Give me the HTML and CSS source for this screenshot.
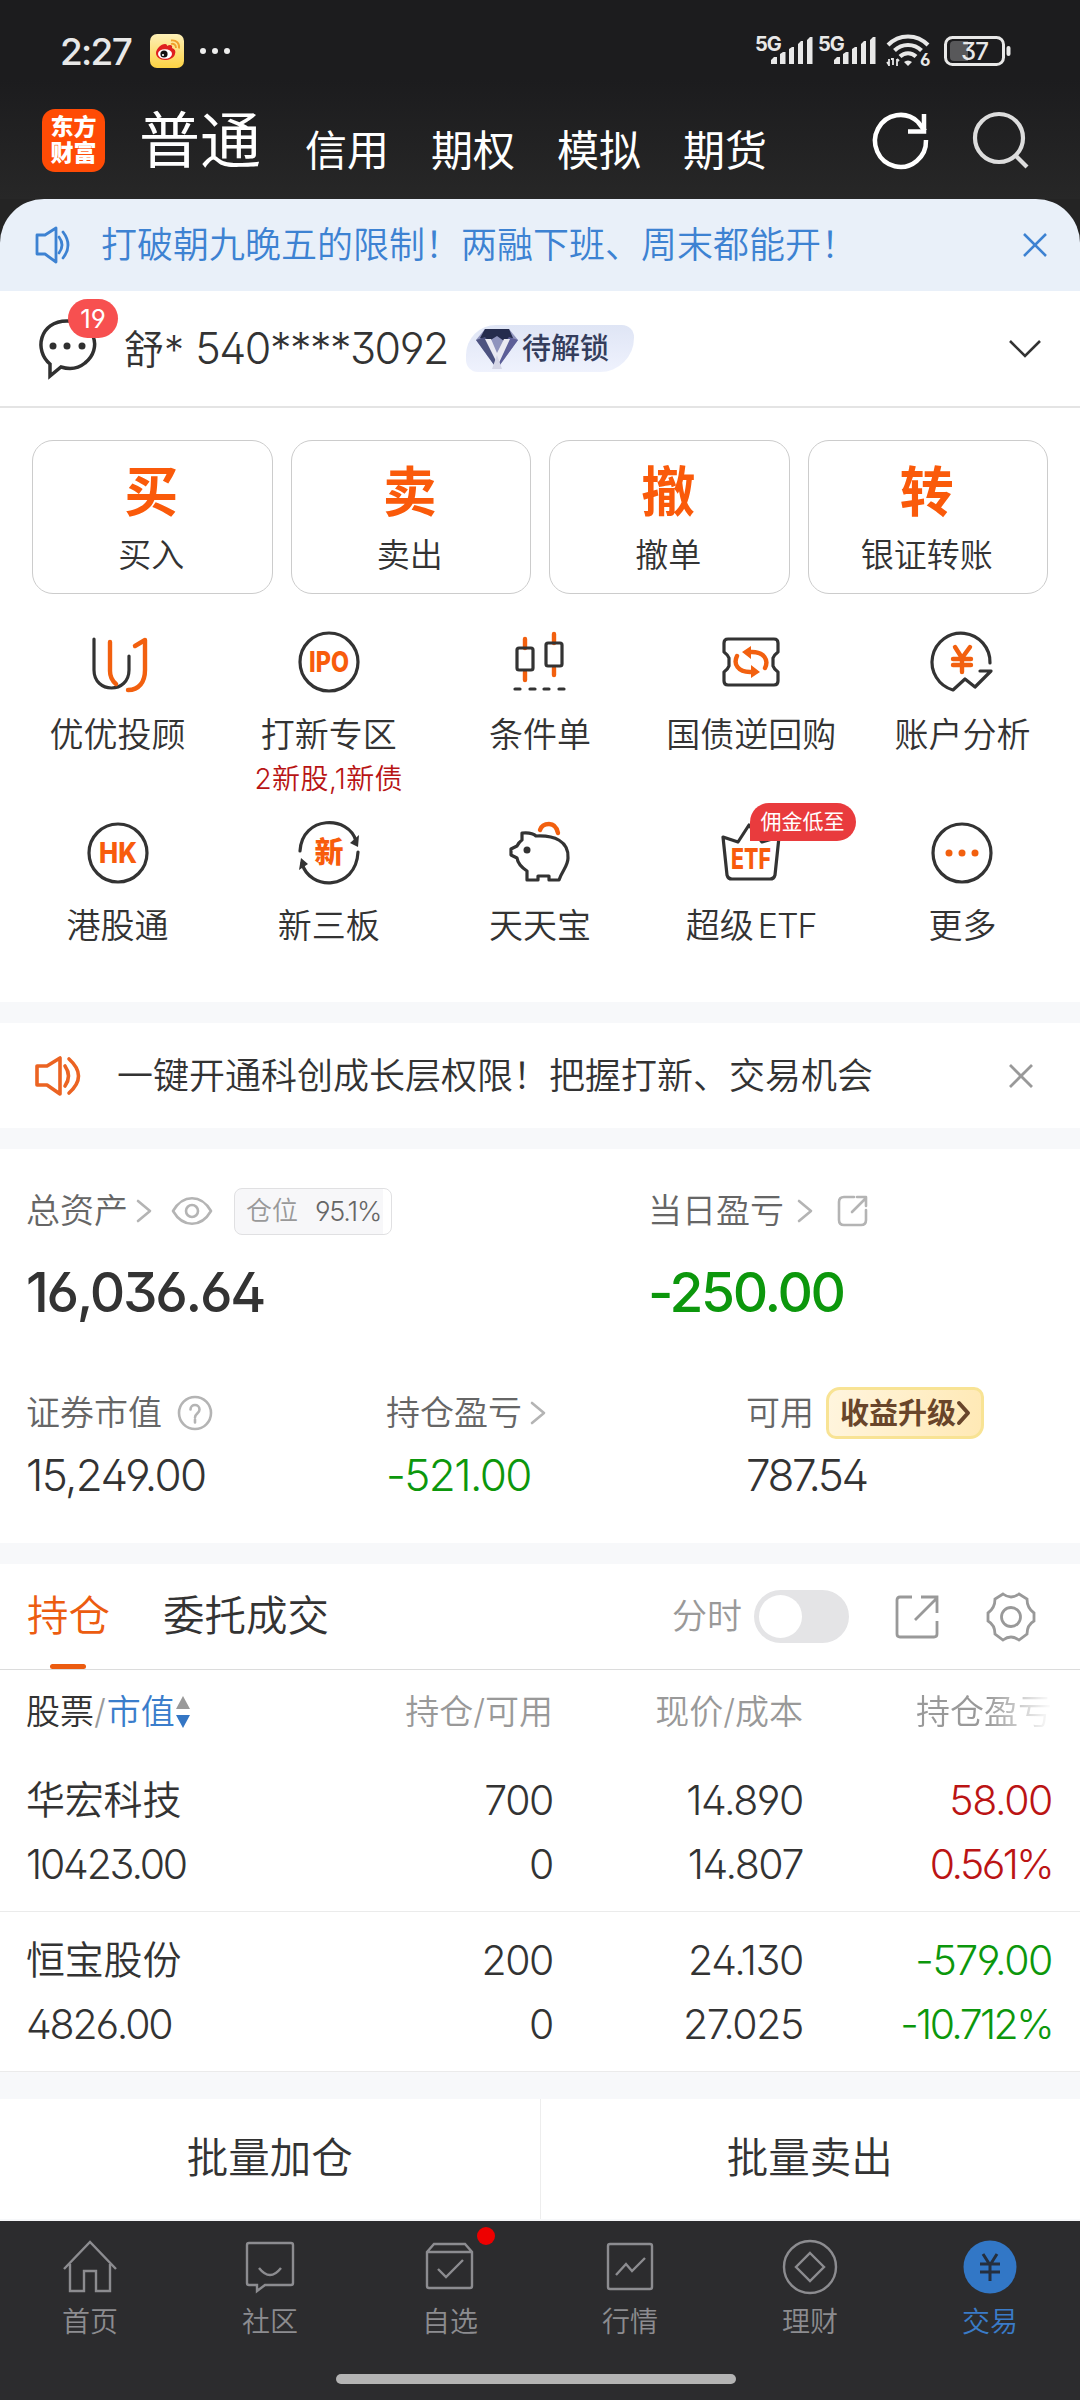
FILE: index.html
```html
<!DOCTYPE html>
<html lang="zh-CN">
<head>
    <meta charset="UTF-8">
    <meta name="viewport" content="width=device-width, initial-scale=1.0">
    <title>交易</title>
    <link rel="stylesheet" href="styles.css">
</head>
<body>
    <header class="header">
        <div class="status">
            <span class="time">2:27</span>
            <svg class="weibo" width="34" height="34" viewBox="0 0 34 34">
                <defs>
                    <linearGradient id="weiboBg" x1="0" y1="0" x2="0" y2="1">
                        <stop offset="0" stop-color="#fdf0b8"/>
                        <stop offset="1" stop-color="#fdd243"/>
                    </linearGradient>
                </defs>
                <rect width="34" height="34" rx="7" fill="url(#weiboBg)"/>
                <path d="M6 19c0-4 5-9 9-9 2 0 2 1 2 2 3-2 6-1 5 2 3 1 4 3 3 6-1 4-6 6-10 6-5 0-9-3-9-7z" fill="#df2020"/>
                <ellipse cx="15" cy="20" rx="7" ry="4.800" fill="#fff"/>
                <circle cx="14" cy="20" r="3.600" fill="#111"/>
                <circle cx="13" cy="21" r="1.100" fill="#fff"/>
                <path d="M21 10c3-1 5 1 5 4M21 6.500c5-1 9 3 8 8" fill="none" stroke="#f0a02c" stroke-width="1.800"/>
            </svg>
            <svg width="32" height="8" viewBox="0 0 32 8" fill="#eee">
                <circle cx="4" cy="4" r="3"/><circle cx="16" cy="4" r="3"/><circle cx="28" cy="4" r="3"/>
            </svg>
            <div class="status-right">
                <svg width="60" height="34" viewBox="0 0 60 34" fill="#e8e8e8">
                    <text class="net" x="0" y="17">5G</text>
                    <path d="M16 30v-4l3-3h3v7zM25 30V20l3-2h2.500v12zM34 30V15l3-2h2v17zM43 30V10l3-3h2v23zM52 30V6l3-3h2.500v27z"/>
                </svg>
                <svg width="60" height="34" viewBox="0 0 60 34" fill="#e8e8e8">
                    <text class="net" x="0" y="17">5G</text>
                    <path d="M16 30v-4l3-3h3v7zM25 30V20l3-2h2.500v12zM34 30V15l3-2h2v17zM43 30V10l3-3h2v23zM52 30V6l3-3h2.500v27z"/>
                </svg>
                <svg class="wifi" width="44" height="36" viewBox="0 0 44 36" fill="none" stroke="#e8e8e8" stroke-width="4">
                    <path d="M2 12C13 .500 31 .500 42 12"/>
                    <path d="M8.500 17.500C16 10 28 10 35.500 17.500"/>
                    <path d="M14 23.500c4.500-4.500 11.500-4.500 16 0"/>
                    <path d="M18 29l4 4 4-4c-2.500-2-5.500-2-8 0z" fill="#e8e8e8" stroke="none"/>
                    <path d="M3 26v7M7 25v7M11 26v7M1 29l2 3M7 26l-2 0M13 28l-2-2" stroke-width="1.800"/>
                    <text class="wifi-num" x="34" y="33">6</text>
                </svg>
                <svg class="battery" width="68" height="30" viewBox="0 0 68 30">
                    <rect x="1.500" y="1.500" width="58" height="27" rx="7" fill="none" stroke="#e8e8e8" stroke-width="3"/>
                    <path d="M10 5h14v20H10q-4 0-4-4V9q0-4 4-4z" fill="#58585a"/>
                    <rect x="62.500" y="10" width="4" height="10" rx="2" fill="#e8e8e8"/>
                    <text class="battery-num" x="30.500" y="23.500" text-anchor="middle">37</text>
                </svg>
            </div>
        </div>
        <nav class="top-nav">
            <div class="logo"><span>东方</span><span>财富</span></div>
            <ul class="account-tabs">
                <li class="current">普通</li>
                <li>信用</li>
                <li>期权</li>
                <li>模拟</li>
                <li>期货</li>
            </ul>
            <svg class="refresh" width="58" height="58" viewBox="0 0 58 58" fill="none" stroke="#fff" stroke-width="4.500">
                <path d="M54 29A25.500 26 0 1 1 46 11L53 20"/>
                <path d="M52 3v17.500H36"/>
            </svg>
            <svg width="58" height="58" viewBox="0 0 58 58" fill="none" stroke="#ddd" stroke-width="4.200">
                <circle cx="27" cy="27" r="24"/>
                <path d="M43 44l12 12"/>
            </svg>
        </nav>
    </header>

    <div class="banner">
        <svg width="38" height="40" viewBox="0 0 38 40" fill="none" stroke="#3d82d2" stroke-width="2.800" stroke-linejoin="round">
            <path d="M2 10h8l11-7v34l-11-8H2z"/>
            <path d="M24 12q6 8 0 16M28 7q10 13 0 26" stroke-linecap="round"/>
        </svg>
        <p>打破朝九晚五的限制！两融下班、周末都能开！</p>
        <svg width="26" height="26" viewBox="0 0 26 26" fill="none" stroke="#3d82d2" stroke-width="2.500">
            <path d="M2 2l22 22M24 2L2 24"/>
        </svg>
    </div>

    <div class="account">
        <div class="message">
            <svg width="60" height="60" viewBox="0 0 60 60" fill="none" stroke="#303030" stroke-width="3.500">
                <path d="M12 45C-4 32 1 2 29 2s36 28 18 42c-6 5-14 7-24 4L12 57z"/>
                <g fill="#303030" stroke="none"><circle cx="15" cy="27" r="3.500"/><circle cx="29" cy="27" r="3.500"/><circle cx="44" cy="27" r="3.500"/></g>
            </svg>
            <span class="count">19</span>
        </div>
        <span class="account-name">舒* <span class="num">540****3092</span></span>
        <span class="vip">
            <svg width="44" height="42" viewBox="0 0 44 42">
                <path d="M10 1h24l9 11-21 29L1 12z" fill="#8f93bd"/>
                <path d="M10 1h24l4 9-9 3-7-5-8 5-9-3z" fill="#252c4d"/>
                <path d="M1 12l9-3 8 10 4 22z" fill="#4d5380"/>
                <path d="M43 12l-9-3-8 10-4 22z" fill="#5d5f98"/>
                <path d="M10 11h6l6 14 7-14h6L23 37z" fill="#e9e9f2"/>
                <path d="M22 27l5 14H17z" fill="#d5d6e6"/>
            </svg>
            待解锁
        </span>
        <svg class="expand" width="34" height="20" viewBox="0 0 34 20" fill="none" stroke="#333" stroke-width="2.600"><path d="M2 2l15 15L32 2"/></svg>
    </div>

    <section class="trade">
        <a class="trade-btn"><b>买</b><span>买入</span></a>
        <a class="trade-btn"><b>卖</b><span>卖出</span></a>
        <a class="trade-btn"><b>撤</b><span>撤单</span></a>
        <a class="trade-btn"><b>转</b><span>银证转账</span></a>
    </section>

    <section class="services">
        <a class="service">
            <svg class="icon" viewBox="0 0 64 64">
                <path d="M8 9v31c0 24 35 24 35 0V26"/>
                <path class="hot" d="M24 12v29q0 8 6 13M42 60c11 0 17-8 17-20V10l-10 6"/>
            </svg>
            <span>优优投顾</span>
        </a>
        <a class="service">
            <svg class="icon" viewBox="0 0 64 64">
                <circle cx="32" cy="32" r="29"/>
                <text class="icon-text" x="32" y="42" textLength="40" lengthAdjust="spacingAndGlyphs" text-anchor="middle">IPO</text>
            </svg>
            <span>打新专区</span>
            <small>2新股,1新债</small>
        </a>
        <a class="service">
            <svg class="icon" viewBox="0 0 64 64">
                <path class="hot" d="M17 9v9M17 42v8M46 4v9M46 38v7"/>
                <rect x="9" y="18" width="16" height="22" rx="2"/>
                <rect x="38" y="13" width="16" height="23" rx="2"/>
                <path d="M7 59h5M22 59h5M36 59h5M51 59h5"/>
            </svg>
            <span>条件单</span>
        </a>
        <a class="service">
            <svg class="icon" viewBox="0 0 64 64">
                <path d="M9 9h46q4 0 4 4v9q-4 3-5 6v8q1 3 5 6v9q0 4-4 4H9q-4 0-4-4v-9q4-3 5-6v-8q-1-3-5-6v-9q0-4 4-4z"/>
                <path class="hot" d="M29 22h4c12 0 17 8 13 16M35 42h-4c-12 0-17-8-13-16"/>
                <path class="hot-fill" d="M32 16v13l-9-7zM32 35v13l9-6z"/>
            </svg>
            <span>国债逆回购</span>
        </a>
        <a class="service">
            <svg class="icon" viewBox="0 0 64 64">
                <path d="M60 33A29 29 0 1 0 23 60l12-11 10 8 16-16H50"/>
                <path class="hot" d="M25 17l7 11 8-11M23 29h18M23 35h18M32 28v14"/>
            </svg>
            <span>账户分析</span>
        </a>
        <a class="service">
            <svg class="icon" viewBox="0 0 64 64">
                <circle cx="32" cy="32" r="29"/>
                <text class="icon-text" x="32" y="42" textLength="38" lengthAdjust="spacingAndGlyphs" text-anchor="middle">HK</text>
            </svg>
            <span>港股通</span>
        </a>
        <a class="service">
            <svg class="icon" viewBox="0 0 64 64">
                <path d="M3 30C5-6 52-6 59 20M61 31C59 70 12 70 5 42"/>
                <path class="dark-fill" d="M62 14l-1 12-8-4zM2 49l2-12 7 6z"/>
                <text class="icon-text cn" x="32" y="42" text-anchor="middle">新</text>
            </svg>
            <span>新三板</span>
        </a>
        <a class="service">
            <svg class="icon" viewBox="0 0 64 64">
                <path class="hot" d="M32 9q2-6 9-6t9 9"/>
                <path d="M14 12q10-1 14 3c18-1 33 5 32 22 0 8-6 13-9 22H41v-4H30v4H19v-9Q10 44 9 37l-6-3v-6l6-3q2-4 5-6z"/>
                <circle class="dark-fill" cx="19" cy="29" r="3.500"/>
            </svg>
            <span>天天宝</span>
        </a>
        <a class="service">
            <svg class="icon" viewBox="0 0 64 64">
                <path d="M4 16l15 5 11-17 13 17 17-5-4 38q-1 4-5 4H13q-4 0-5-4z"/>
                <text class="icon-text" x="32" y="48" textLength="40" lengthAdjust="spacingAndGlyphs" text-anchor="middle">ETF</text>
            </svg>
            <em class="tag">佣金低至</em>
            <span>超级<i class="latin">ETF</i></span>
        </a>
        <a class="service">
            <svg class="icon" viewBox="0 0 64 64">
                <circle cx="32" cy="32" r="29"/>
                <g class="hot-fill"><circle cx="19" cy="32" r="3.500"/><circle cx="32" cy="32" r="3.500"/><circle cx="45" cy="32" r="3.500"/></g>
            </svg>
            <span>更多</span>
        </a>
    </section>

    <div class="notice">
        <svg width="46" height="42" viewBox="0 0 46 42" fill="none" stroke="#eb6322" stroke-width="3.600" stroke-linejoin="round">
            <path d="M2 11h10l13-8v36l-13-9H2z"/>
            <path d="M30 11q7 10 0 20M34 4q19 17 0 34" stroke-linecap="round"/>
        </svg>
        <p>一键开通科创成长层权限！把握打新、交易机会</p>
        <svg width="26" height="26" viewBox="0 0 26 26" fill="none" stroke="#999" stroke-width="2.800"><path d="M2 2l22 22M24 2L2 24"/></svg>
    </div>

    <section class="assets">
        <div class="asset-row main">
            <div class="asset">
                <div class="label">
                    总资产
                    <svg class="arrow" width="16" height="24" viewBox="0 0 16 24"><path d="M2 2l12 10L2 22"/></svg>
                    <svg class="eye" width="42" height="30" viewBox="0 0 42 30"><path d="M2 15C12-2 30-2 40 15 30 32 12 32 2 15z"/><circle cx="21" cy="15" r="6"/></svg>
                    <span class="chip">仓位 <i>95.1%</i></span>
                </div>
                <div class="value">16,036.64</div>
            </div>
            <div class="asset">
                <div class="label">
                    当日盈亏
                    <svg class="arrow wide" width="16" height="24" viewBox="0 0 16 24"><path d="M2 2l12 10L2 22"/></svg>
                    <svg class="share" width="32" height="32" viewBox="0 0 32 32"><path d="M17 2H7Q2 2 2 7v18q0 5 5 5h17q5 0 5-5V15M15 17L29 3M20 2h9v9"/></svg>
                </div>
                <div class="value down">-250.00</div>
            </div>
        </div>
        <div class="asset-row sub">
            <div class="asset">
                <div class="label">
                    证券市值
                    <svg class="help" width="36" height="36" viewBox="0 0 36 36"><circle cx="18" cy="18" r="16"/><path d="M13.500 14.500c0-6 9-6 9 0 0 4-4.500 4-4.500 8M18 24.500v3"/></svg>
                </div>
                <div class="value">15,249.00</div>
            </div>
            <div class="asset">
                <div class="label">
                    持仓盈亏
                    <svg class="arrow" width="16" height="24" viewBox="0 0 16 24"><path d="M2 2l12 10L2 22"/></svg>
                </div>
                <div class="value down">-521.00</div>
            </div>
            <div class="asset">
                <div class="label">
                    可用
                    <span class="upgrade">收益升级<svg width="14" height="24" viewBox="0 0 14 24"><path d="M2 2l9 10-9 10"/></svg></span>
                </div>
                <div class="value narrow">787.54</div>
            </div>
        </div>
    </section>

    <section class="holdings">
        <div class="tabs">
            <a class="tab active">持仓</a>
            <a class="tab">委托成交</a>
            <span class="minute">分时</span>
            <span class="switch"></span>
            <svg class="tool" width="44" height="44" viewBox="0 0 44 44"><path d="M17 2H5Q2 2 2 5v34q0 3 3 3h34q3 0 3-3V26M20 25L41 4M26 2h16v16"/></svg>
            <svg class="tool gear" width="50" height="50" viewBox="0 0 50 50">
                <path d="M17 2q8 6 16 0l8 5q0 9 7 14v8q-7 4-7 13l-8 6q-8-6-16 0l-8-6q0-9-7-13v-8q7-5 7-14z"/>
                <circle cx="25" cy="25" r="9.500"/>
            </svg>
        </div>
        <div class="table-row table-head">
            <span class="dark">股票<i>/</i><em>市值</em><svg width="14" height="32" viewBox="0 0 14 32"><path d="M7 0l7 13H0z" fill="#999"/><path d="M7 32l7-13H0z" fill="#3476c4"/></svg></span>
            <span>持仓/可用</span>
            <span>现价/成本</span>
            <span class="fade">持仓盈亏</span>
        </div>
        <div class="table-row stock">
            <div><span class="name">华宏科技</span><span>10423.00</span></div>
            <div><span>700</span><span>0</span></div>
            <div><span>14.890</span><span>14.807</span></div>
            <div class="up"><span>58.00</span><span class="rate">0.561%</span></div>
        </div>
        <div class="table-row stock">
            <div><span class="name">恒宝股份</span><span>4826.00</span></div>
            <div><span>200</span><span>0</span></div>
            <div><span>24.130</span><span>27.025</span></div>
            <div class="down"><span>-579.00</span><span class="rate">-10.712%</span></div>
        </div>
    </section>

    <div class="batch">
        <a>批量加仓</a>
        <a>批量卖出</a>
    </div>

    <footer class="footer">
        <nav class="tab-bar">
            <a>
                <svg viewBox="0 0 60 60"><path d="M4 32L30 5l26 27M10 27v27h14V34h12v20h14V27"/></svg>
                <span>首页</span>
            </a>
            <a>
                <svg viewBox="0 0 60 60"><path d="M9 6h42q2 0 2 2v38q0 2-2 2H25l-8 6v-6H9q-2 0-2-2V8q0-2 2-2zM19 31q11 14 22 0"/></svg>
                <span>社区</span>
            </a>
            <a>
                <svg viewBox="0 0 60 60"><path d="M7 15l7-8h31l7 8v34q0 2-2 2H9q-2 0-2-2zM7 15h45M18 32l8 8 17-17"/></svg>
                <i class="dot"></i>
                <span>自选</span>
            </a>
            <a>
                <svg viewBox="0 0 60 60"><rect x="8" y="7" width="44" height="45" rx="2"/><path d="M16 38l10-11 6 7 13-13"/></svg>
                <span>行情</span>
            </a>
            <a>
                <svg viewBox="0 0 60 60"><circle cx="30" cy="30" r="26"/><path d="M30 16l14 14-14 14-14-14z"/></svg>
                <span>理财</span>
            </a>
            <a class="on">
                <svg viewBox="0 0 60 60"><circle cx="30" cy="30" r="26.500"/><path d="M23 17l7 11 7-11M20 27h20M20 35h20M30 27v17"/></svg>
                <span>交易</span>
            </a>
        </nav>
        <div class="home-bar"></div>
    </footer>
</body>
</html>
```

FILE: styles.css
```css
* {
    box-sizing: border-box;
}

body {
    margin: 0;
    width: 1080px;
    height: 2400px;
    overflow: hidden;
    background-color: #242424;
    color: #333;
    font-family: Inter, "Noto Sans CJK SC", sans-serif;
    font-weight: 350;
    font-feature-settings: "ss01";
    line-height: 1;
    white-space: nowrap;
}

svg {
    display: block;
    flex: none;
    overflow: visible;
}

p, ul {
    margin: 0;
    padding: 0;
    list-style: none;
}

i, em {
    font-style: normal;
}

/* Dark header with the status bar */
.header {
    height: 199px;
    background: linear-gradient(#1c1c1e 40%, #272727);
    color: #fff;
}

.status {
    display: flex;
    align-items: center;
    height: 102px;
    padding: 0 68px 0 60px;
}

.time {
    width: 90px;
    color: #e8e8e8;
    font-size: 37px;
    font-weight: 450;
    letter-spacing: -1.7px;
}

.weibo {
    margin-right: 15px;
}

.status-right {
    display: flex;
    align-items: center;
    gap: 3px;
    margin-left: auto;
}

.net {
    font-size: 20px;
    font-weight: 700;
    letter-spacing: -1px;
}

.wifi {
    margin-left: 5px;
}

.wifi-num {
    fill: #e8e8e8;
    stroke: none;
    font-size: 17px;
    font-weight: 700;
}

.battery {
    margin-left: 11px;
}

.battery-num {
    fill: #e8e8e8;
    font-size: 24px;
    font-weight: 500;
    letter-spacing: -1px;
}

.top-nav {
    display: flex;
    align-items: center;
    height: 76px;
    padding: 0 50px 0 42px;
}

.logo {
    display: grid;
    align-content: center;
    justify-items: center;
    gap: 3px;
    width: 63px;
    height: 63px;
    margin-right: 34px;
    border-radius: 13px;
    background-color: #ff4b05;
    font-size: 23px;
    font-weight: 900;
}

.account-tabs {
    display: flex;
    align-items: flex-end;
    gap: 42px;
    height: 64px;
    font-size: 42px;
    font-weight: 400;
}

.account-tabs .current {
    margin-right: 2px;
    font-size: 61px;
}

.refresh {
    margin: 0 42px 0 auto;
}

/* Blue announcement strip */
.banner {
    display: flex;
    align-items: center;
    height: 92px;
    padding: 0 32px 0 35px;
    border-radius: 44px 44px 0 0;
    background-color: #e9f0f9;
    color: #3d82d2;
    font-size: 36px;
}

.banner p {
    flex: 1;
    margin-left: 28px;
}

/* Account line */
.account {
    display: flex;
    align-items: center;
    height: 117px;
    padding: 0 38px;
    background-color: #fff;
    border-bottom: 2px solid #e4e4e4;
}

.message {
    position: relative;
    width: 86px;
}

.count {
    position: absolute;
    top: -20px;
    left: 30px;
    width: 50px;
    height: 39px;
    border-radius: 20px;
    background-color: #f75050;
    color: #fff;
    font-size: 26px;
    font-weight: 400;
    line-height: 39px;
    text-align: center;
}

.account-name {
    width: 342px;
    font-size: 40px;
}

.account-name .num {
    font-size: 43px;
    letter-spacing: -1.5px;
}

.vip {
    display: flex;
    align-items: center;
    gap: 3px;
    width: 168px;
    height: 47px;
    padding-left: 9px;
    border-radius: 30px 12px 34px 12px;
    background: linear-gradient(#dfe5f5, #eff2fd);
    color: #343d5c;
    font-size: 29px;
    font-weight: 500;
}

.expand {
    margin-left: auto;
}

/* Four main trade buttons */
.trade {
    display: grid;
    grid-template-columns: repeat(4, 1fr);
    gap: 18px;
    padding: 32px 32px 0;
    background-color: #fff;
}

.trade-btn {
    display: grid;
    justify-items: center;
    align-content: start;
    gap: 19px;
    height: 154px;
    padding: 25px 2px 0 0;
    border: 1px solid #ccc;
    border-radius: 21px;
    font-size: 33px;
}

.trade-btn b {
    color: #fa5a0a;
    font-size: 54px;
    font-weight: 700;
}

/* Shortcut grid */
.services {
    display: grid;
    grid-template-columns: repeat(5, 1fr);
    grid-auto-rows: 191px;
    height: 408px;
    padding: 36px 12px 0;
    background-color: #fff;
}

.service {
    position: relative;
    display: flex;
    flex-direction: column;
    align-items: center;
    font-size: 34px;
}

.service span {
    margin-top: 24px;
}

.service small {
    margin-top: 13px;
    color: #b81414;
    font-size: 28px;
    letter-spacing: 0.4px;
}

.latin {
    margin-left: 4px;
    letter-spacing: -1px;
}

.icon {
    width: 64px;
    height: 64px;
    fill: none;
    stroke: #333;
    stroke-width: 3.2;
    stroke-linecap: round;
    stroke-linejoin: round;
}

.icon .hot {
    stroke: #f2600f;
    stroke-width: 4.4;
}

.icon .hot-fill {
    fill: #f2600f;
    stroke: none;
}

.icon .dark-fill {
    fill: #333;
    stroke: none;
}

.icon-text {
    fill: #f85c0c;
    stroke: none;
    font-size: 28px;
    font-weight: 800;
}

.icon-text.cn {
    font-size: 29px;
}

.tag {
    position: absolute;
    top: -18px;
    left: 104px;
    width: 106px;
    height: 38px;
    border-radius: 19px 19px 19px 0;
    background-color: #e93b3d;
    color: #fff;
    font-size: 21px;
    font-weight: 400;
    line-height: 37px;
    text-align: center;
}

/* Orange notice, between two grey strips */
.notice {
    display: flex;
    align-items: center;
    height: 147px;
    padding: 0 46px 0 35px;
    border: solid #f7f8fa;
    border-width: 21px 0;
    background-color: #fff;
    font-size: 36px;
}

.notice p {
    flex: 1;
    margin-left: 36px;
}

/* Assets overview */
.assets {
    height: 394px;
    padding: 36px 26px 0;
    background-color: #fff;
}

.asset-row {
    display: grid;
}

.asset-row.main {
    grid-template-columns: 622px 1fr;
}

.asset-row.sub {
    grid-template-columns: 360px 360px 1fr;
    margin-top: 65px;
}

.label {
    display: flex;
    align-items: center;
    height: 52px;
    color: #666;
    font-size: 34px;
}

.label svg {
    fill: none;
    stroke: #b4b4b4;
    stroke-width: 2.6;
    stroke-linecap: round;
    stroke-linejoin: round;
}

.label .arrow {
    margin-left: 8px;
}

.label .arrow.wide {
    margin-left: 13px;
}

.label .eye {
    margin: 0 21px 0 19px;
}

.label .share {
    margin-left: 24px;
}

.label .help {
    margin-left: 15px;
}

.chip {
    display: flex;
    align-items: center;
    justify-content: space-between;
    width: 158px;
    height: 47px;
    padding: 0 10px 0 11px;
    border: 1px solid #e0e0e2;
    border-radius: 8px;
    background: linear-gradient(90deg, #f7f7f9 95.1%, #fff 95.1%);
    color: #999;
    font-size: 26px;
}

.chip i {
    color: #666;
    font-size: 27px;
    letter-spacing: -1.2px;
}

.value {
    font-size: 44px;
    font-weight: 350;
    line-height: 52px;
    letter-spacing: -1.6px;
}

.value.narrow {
    letter-spacing: -2.5px;
}

.sub .value {
    margin-top: 10px;
}

.main .value {
    margin-top: 25px;
    font-size: 55px;
    font-weight: 450;
    line-height: 60px;
    letter-spacing: -2.3px;
}

.up {
    color: #bb1414;
}

.down {
    color: #0c970c;
}

.upgrade {
    display: flex;
    align-items: center;
    gap: 1px;
    width: 158px;
    height: 52px;
    margin-left: 12px;
    padding-left: 11px;
    border: 3px solid #f8e394;
    border-radius: 14px 10px 14px 10px;
    background: linear-gradient(100deg, #fff5de, #ffe9b5);
    color: #69452a;
    font-size: 29px;
    font-weight: 700;
}

.upgrade svg {
    stroke: #69452a;
    stroke-width: 4;
}

/* Positions table */
.holdings {
    border-top: 21px solid #f7f8fa;
    background-color: #fff;
}

.tabs {
    display: flex;
    align-items: center;
    height: 106px;
    padding: 0 44px 0 27px;
    border-bottom: 1px solid #dcdcdc;
    font-size: 41px;
}

.tab {
    position: relative;
    margin-right: 53px;
    font-size: 41.5px;
}

.tab.active {
    color: #ec5c10;
}

.tab.active::after {
    content: "";
    position: absolute;
    left: 23px;
    bottom: -32px;
    width: 36px;
    height: 5px;
    border-radius: 3px;
    background-color: #ec5c10;
}

.minute {
    margin-left: auto;
    color: #999;
    font-size: 35px;
}

.switch {
    width: 95px;
    height: 53px;
    margin: 0 46px 0 12px;
    padding: 5px;
    border-radius: 27px;
    background-color: #e4e4e6;
}

.switch::before {
    content: "";
    display: block;
    width: 43px;
    height: 43px;
    border-radius: 50%;
    background-color: #fff;
}

.tool {
    fill: none;
    stroke: #999;
    stroke-width: 2.8;
}

.tool.gear {
    margin-left: 47px;
}

.table-row {
    display: grid;
    grid-template-columns: 277px 250px 250px 249px;
    padding: 0 28px 0 26px;
    text-align: right;
}

.table-row > :first-child {
    text-align: left;
}

.table-head {
    align-items: center;
    height: 82px;
    padding-top: 2px;
    color: #999;
    font-size: 34px;
}

.table-head .dark {
    display: flex;
    align-items: center;
    color: #333;
}

.table-head i {
    margin-right: 1px;
    color: #999;
}

.table-head em {
    color: #3a7dcb;
}

.table-head svg {
    margin-left: 1px;
}

.fade {
    -webkit-mask-image: linear-gradient(90deg, #000 74%, transparent);
    mask-image: linear-gradient(90deg, #000 74%, transparent);
}

.stock {
    height: 160px;
    padding-top: 16px;
    border-bottom: 1px solid #ebebeb;
    font-size: 41px;
    letter-spacing: -1.4px;
}

.stock > :first-child {
    letter-spacing: -2.2px;
}

.stock span {
    display: block;
    line-height: 64px;
}

.stock .name {
    font-size: 39px;
    letter-spacing: -0.2px;
}

.stock .rate {
    letter-spacing: -2.6px;
}

/* Batch actions */
.batch {
    display: grid;
    grid-template-columns: 1fr 1fr;
    height: 149px;
    padding-right: 1px;
    border-top: 27px solid #f7f8fa;
    border-bottom: 2px solid #f7f8fa;
    background-color: #fff;
    font-size: 41.5px;
    line-height: 119px;
    text-align: center;
}

.batch a + a {
    border-left: 1px solid #ededed;
}

/* Bottom tab bar */
.footer {
    height: 180px;
    background-color: #2c2c2e;
}

.tab-bar {
    display: grid;
    grid-template-columns: repeat(6, 1fr);
    height: 153px;
    padding-top: 16px;
}

.tab-bar a {
    position: relative;
    display: flex;
    flex-direction: column;
    align-items: center;
    gap: 11px;
    color: #8c8c90;
    font-size: 28px;
}

.tab-bar svg {
    width: 60px;
    height: 60px;
    fill: none;
    stroke: #8c8c90;
    stroke-width: 2.4;
}

.tab-bar .on {
    color: #3a7bc8;
}

.tab-bar .on svg {
    stroke: #252f3e;
    stroke-width: 3;
}

.tab-bar .on circle {
    fill: #3277c6;
    stroke: none;
}

.dot {
    position: absolute;
    top: -10px;
    left: 117px;
    width: 18px;
    height: 18px;
    border-radius: 50%;
    background-color: #ee0000;
}

.home-bar {
    width: 400px;
    height: 10px;
    margin-left: 336px;
    border-radius: 5px;
    background-color: #b4b4b4;
}
```
